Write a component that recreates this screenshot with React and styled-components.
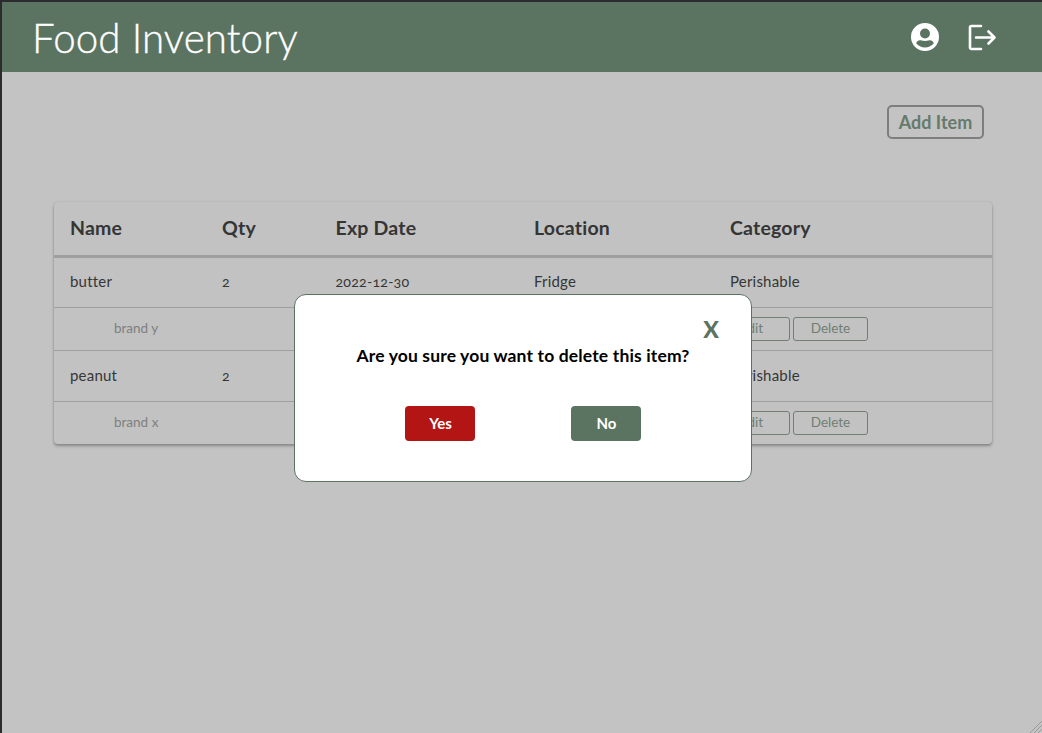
import React from "react";
import styled, { createGlobalStyle } from "styled-components";

const Global = createGlobalStyle`
  html, body { margin: 0; padding: 0; height: 100%; background: #2b2b2f; }
  body { font-family: "Lato", "Open Sans", sans-serif; overflow: hidden; }
  #root { height: 100%; }
`;

const Page = styled.div`
  position: relative;
  height: 733px;
  box-sizing: border-box;
  padding: 2px 0 0 2px;
  overflow: hidden;
`;
const Main = styled.div`
  height: 731px;
  background: #c3c3c3;
  display: flex;
  flex-direction: column;
`;
const Header = styled.header`
  height: 70px;
  flex: none;
  background: #5b7361;
  display: flex;
  align-items: center;
  justify-content: space-between;
  padding: 0 46px 0 30px;
`;
const Title = styled.h1`
  margin: 0;
  color: #fff;
  font-family: "Lato", sans-serif;
  font-weight: 300;
  font-size: 40.3px;
  letter-spacing: 0.1px;
  -webkit-text-stroke: 0.35px #fff;
`;
const HeaderIcons = styled.div`
  display: flex;
  align-items: center;
  gap: 29px;
  color: #fff;
`;
const IconSvg = styled.svg`
  display: block;
  flex: none;
`;
const Toolbar = styled.div`
  display: flex;
  justify-content: flex-end;
  padding: 33px 58px 0 0;
`;
const AddButton = styled.button`
  width: 97px;
  height: 34px;
  box-sizing: border-box;
  border: 2px solid #7e7e7e;
  border-radius: 5px;
  background: transparent;
  color: #667a6b;
  font-family: inherit;
  font-weight: 700;
  font-size: 18px;
  line-height: 1;
  padding: 0 0 1px;
`;
const Table = styled.div`
  margin: 63px 50px 0 52px;
  background: #c2c2c2;
  border-radius: 4px;
  box-shadow: 0 2px 3px rgba(0, 0, 0, 0.3), 0 0 2px rgba(0, 0, 0, 0.1);
  overflow: hidden;
`;
const Row = styled.div`
  display: grid;
  grid-template-columns: 152px 113.5px 198.5px 196px 1fr;
  align-items: center;
  box-sizing: border-box;
  height: ${(p) => p.$h}px;
  border-bottom: ${(p) => p.$line}px solid #9f9f9f;
  padding-bottom: ${(p) => p.$pad}px;
  color: #363636;
  font-size: 15px;
  letter-spacing: 0.2px;
`;
const HeadRow = styled(Row)`
  font-size: 19.5px;
  font-weight: 700;
  color: #353535;
  letter-spacing: 0.2px;
`;
const Cell = styled.div`
  padding-left: 16px;
  white-space: nowrap;
`;
const Numeric = styled(Cell)`
  font-size: 14.2px;
  font-variant-numeric: oldstyle-nums;
  font-feature-settings: "onum" 1;
`;
const SubRow = styled.div`
  display: flex;
  align-items: center;
  justify-content: space-between;
  box-sizing: border-box;
  height: ${(p) => p.$h}px;
  border-bottom: 1px solid #9f9f9f;
  padding: 0 124px 0 60px;
  &:last-child { border-bottom: 0; }
`;
const Brand = styled.span`
  color: #7f7f7f;
  font-size: 13.5px;
  font-weight: 400;
  padding-bottom: 2px;
`;
const Actions = styled.div`
  display: flex;
  gap: 3px;
`;
const SmallButton = styled.button`
  width: ${(p) => p.$w}px;
  height: 24px;
  box-sizing: border-box;
  border: 1px solid #6f7f73;
  border-radius: 3px;
  background: transparent;
  color: #6f7f73;
  font-family: inherit;
  font-size: 13.5px;
  padding: 0 0 2px;
`;
const Modal = styled.div`
  position: absolute;
  left: 294px;
  top: 294px;
  width: 458px;
  height: 188px;
  box-sizing: border-box;
  background: #fff;
  border: 1px solid #5b7361;
  border-radius: 12px;
  display: flex;
  flex-direction: column;
  align-items: center;
  padding: 22px 0 0;
`;
const CloseRow = styled.div`
  align-self: flex-end;
  padding-right: 32px;
  height: 28px;
  color: #5b7361;
  font-weight: 900;
  font-size: 23px;
  line-height: 24px;
`;
const Message = styled.p`
  margin: 0;
  color: #000;
  font-weight: 700;
  font-size: 17.5px;
  line-height: 22px;
  height: 61px;
  letter-spacing: 0.15px;
`;
const ModalButtons = styled.div`
  display: flex;
  gap: 96px;
`;
const ModalButton = styled.button`
  width: 70px;
  height: 35px;
  border: 0;
  border-radius: 4px;
  background: ${(p) => p.$bg};
  color: #fff;
  font-family: inherit;
  font-weight: 700;
  font-size: 15px;
  padding: 0 0 1px 1px;
`;
const Grip = styled.svg`
  position: absolute;
  right: 0;
  bottom: 0;
`;

const items = [
  { name: "butter", qty: "2", exp: "2022-12-30", loc: "Fridge", cat: "Perishable", brand: "brand y", top: 50, bottom: 43, pad: 3 },
  { name: "peanut", qty: "2", exp: "2022-12-30", loc: "Fridge", cat: "Perishable", brand: "brand x", top: 51, bottom: 42, pad: 2 },
];

export default function App() {
  return (
    <>
      <Global />
      <Page>
        <Main>
          <Header>
            <Title>Food Inventory</Title>
            <HeaderIcons>
              <IconSvg width="28" height="28" viewBox="0 0 28 28">
                <path
                  fill="currentColor"
                  fillRule="evenodd"
                  d="M14 0a14 14 0 1 0 0 28a14 14 0 0 0 0-28zM14 5.500a5 5 0 1 1 0 10a5 5 0 0 1 0-10zM14 24.500c-3.600 0-6.800-1.700-8.800-4.300c.5-1.700 2-2.900 3.800-2.900c.4 0 1 .1 1.500.3c1 .3 2.100.5 3.500.5s2.500-.2 3.500-.5c.5-.2 1.100-.3 1.500-.3c1.800 0 3.300 1.200 3.800 2.900c-2 2.600-5.200 4.300-8.800 4.300z"
                />
              </IconSvg>
              <IconSvg width="28" height="27" viewBox="0 0 28 27" fill="none" stroke="currentColor" strokeWidth="2.6" strokeLinecap="round" strokeLinejoin="round">
                <path d="M13 2H3.500A1.500 1.500 0 0 0 2 3.500v20A1.500 1.500 0 0 0 3.500 25H13" />
                <path d="M8 13.500h18.500M20.500 7.500l6 6l-6 6" />
              </IconSvg>
            </HeaderIcons>
          </Header>
          <Toolbar>
            <AddButton>Add Item</AddButton>
          </Toolbar>
          <Table>
            <HeadRow $h={56} $line={3} $pad={2}>
              <Cell>Name</Cell>
              <Cell>Qty</Cell>
              <Cell>Exp Date</Cell>
              <Cell>Location</Cell>
              <Cell>Category</Cell>
            </HeadRow>
            {items.map((it) => (
              <React.Fragment key={it.name}>
                <Row $h={it.top} $line={1} $pad={it.pad}>
                  <Cell>{it.name}</Cell>
                  <Numeric>{it.qty}</Numeric>
                  <Numeric>{it.exp}</Numeric>
                  <Cell>{it.loc}</Cell>
                  <Cell>{it.cat}</Cell>
                </Row>
                <SubRow $h={it.bottom}>
                  <Brand>{it.brand}</Brand>
                  <Actions>
                    <SmallButton $w={77}>Edit</SmallButton>
                    <SmallButton $w={75}>Delete</SmallButton>
                  </Actions>
                </SubRow>
              </React.Fragment>
            ))}
          </Table>
        </Main>
        <Modal>
          <CloseRow>X</CloseRow>
          <Message>Are you sure you want to delete this item?</Message>
          <ModalButtons>
            <ModalButton $bg="#b31515">Yes</ModalButton>
            <ModalButton $bg="#5b7361">No</ModalButton>
          </ModalButtons>
        </Modal>
        <Grip width="13" height="13" viewBox="0 0 13 13" stroke="#9a9a9a" strokeWidth="1">
          <path d="M13 1L1 13M13 5L5 13M13 9L9 13" />
        </Grip>
      </Page>
    </>
  );
}
